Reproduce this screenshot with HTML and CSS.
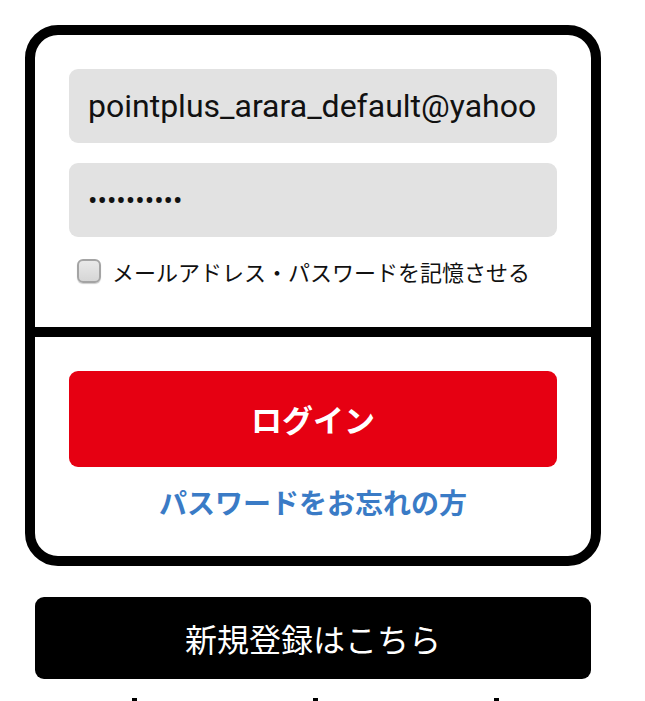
FILE: index.html
```html
<!DOCTYPE html>
<html lang="ja">
<head>
<meta charset="utf-8">
<title>ログイン</title>
<link rel="stylesheet" href="styles.css">
</head>
<body>
<div class="page">
  <form class="card">
    <div class="card-top">
      <input class="field" type="text" value="pointplus_arara_default@yahoo">
      <input class="field field-pass" type="password" value="abcdefghij">
      <label class="remember">
        <input class="check" type="checkbox">
        <span class="remember-text">メールアドレス・パスワードを記憶させる</span>
      </label>
    </div>
    <div class="card-bottom">
      <button class="login" type="button">ログイン</button>
      <a class="forgot" href="#">パスワードをお忘れの方</a>
    </div>
  </form>
  <button class="signup" type="button">新規登録はこちら</button>
  <div class="footer">
    <span class="tick"></span>
    <span class="tick"></span>
    <span class="tick"></span>
  </div>
</div>
</body>
</html>
```

FILE: styles.css
```css
html, body {
  margin: 0;
  padding: 0;
  background: #fff;
}

body {
  font-family: "Noto Sans CJK JP", "Noto Sans", sans-serif;
  overflow: hidden;
}

.page {
  width: 576px;
  padding: 25px 0 0 25px;
  display: flex;
  flex-direction: column;
}

.card {
  margin: 0;
  border: 10px solid #000;
  border-radius: 33px;
  display: flex;
  flex-direction: column;
}

.card-top {
  padding: 34px 34px 44px;
  display: flex;
  flex-direction: column;
  border-bottom: 10px solid #000;
}

.field {
  box-sizing: border-box;
  width: 100%;
  height: 74px;
  margin: 0;
  border: none;
  border-radius: 9px;
  background: #e2e2e2;
  padding: 0 14px 0 19px;
  font-family: Roboto, "Liberation Sans", sans-serif;
  font-size: 32px;
  color: #111;
  outline: none;
}

.field-pass {
  margin-top: 20px;
  font-size: 28px;
}

.remember {
  margin-top: 22px;
  margin-left: 8px;
  display: flex;
  align-items: center;
  gap: 11px;
  height: 24px;
}

.check {
  appearance: none;
  -webkit-appearance: none;
  box-sizing: border-box;
  width: 24px;
  height: 24px;
  margin: 0;
  border: 2px solid #a4a4a4;
  border-radius: 6px;
  background: linear-gradient(#e9e9e9, #d6d6d6);
  box-shadow: 0 1px 1px rgba(0, 0, 0, 0.2);
}

.remember-text {
  font-size: 22px;
  line-height: 24px;
  color: #111;
}

.card-bottom {
  padding: 34px 34px 34px;
  display: flex;
  flex-direction: column;
  align-items: center;
}

.login {
  width: 100%;
  height: 96px;
  border: none;
  border-radius: 9px;
  background: #e60012;
  color: #fff;
  font-family: "Noto Sans CJK JP", sans-serif;
  font-weight: 700;
  font-size: 31px;
  padding: 0 0 2px;
}

.forgot {
  margin-top: 15px;
  height: 40px;
  line-height: 40px;
  font-size: 28px;
  font-weight: 700;
  color: #3a7bc6;
  text-decoration: none;
}

.signup {
  margin: 31px 10px 0;
  height: 82px;
  border: none;
  border-radius: 9px;
  background: #000;
  color: #fff;
  font-family: "Noto Sans CJK JP", sans-serif;
  font-size: 32px;
  font-weight: 400;
  padding: 0;
}

.footer {
  margin-top: 19px;
  margin-left: 107px;
  display: flex;
  gap: 176px;
}

.tick {
  width: 5px;
  height: 4px;
  background: #000;
}
```
